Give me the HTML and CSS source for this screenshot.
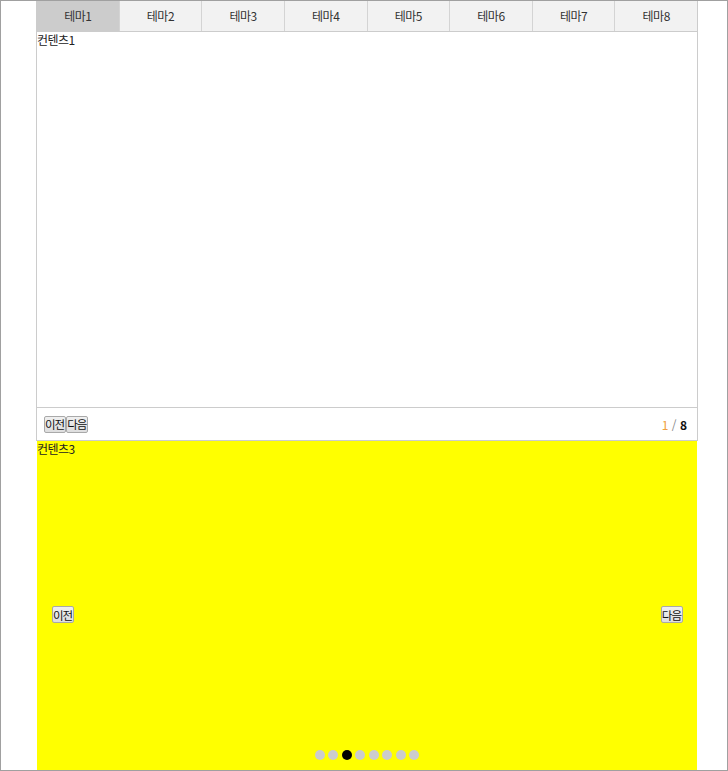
FILE: index.html
```html
<!DOCTYPE html>
<html lang="ko">
<head>
<meta charset="utf-8">
<title>테마</title>
<link rel="stylesheet" href="styles.css">
</head>
<body>
<div class="frame">
  <div class="wrap">
    <div class="tabbox">
      <ul class="tabs">
        <li class="tab active">테마1</li>
        <li class="tab">테마2</li>
        <li class="tab">테마3</li>
        <li class="tab">테마4</li>
        <li class="tab">테마5</li>
        <li class="tab">테마6</li>
        <li class="tab">테마7</li>
        <li class="tab">테마8</li>
      </ul>
      <div class="panel">컨텐츠1</div>
      <div class="pager">
        <div class="btns"><button class="btn">이전</button><button class="btn">다음</button></div>
        <div class="count"><span class="cur">1</span> <span class="sep">/</span> <b>8</b></div>
      </div>
    </div>
    <div class="slider">
      <div class="slide">컨텐츠3</div>
      <button class="btn nav prev">이전</button>
      <button class="btn nav next">다음</button>
      <div class="dots">
        <span class="dot"></span><span class="dot"></span><span class="dot on"></span><span class="dot"></span><span class="dot"></span><span class="dot"></span><span class="dot"></span><span class="dot"></span>
      </div>
    </div>
  </div>
</div>
</body>
</html>
```
FILE: styles.css
```css
* { box-sizing: border-box; }
html, body { margin: 0; padding: 0; background: #fff; }
body {
  font-family: "Noto Sans CJK KR", "Noto Sans", sans-serif;
  font-size: 12px;
  color: #222;
}
.frame {
  width: 728px;
  height: 771px;
  border: 1px solid #a0a0a0;
  overflow: hidden;
  background: #fff;
}
.wrap {
  width: 662px;
  margin-left: 35px;
}
.tabbox {
  border: 1px solid #cccccc;
  border-top: 0;
}
.tabs {
  list-style: none;
  margin: 0;
  padding: 0;
  display: flex;
  border-bottom: 1px solid #cccccc;
}
.tab {
  flex: 1 1 0;
  height: 30px;
  line-height: 30px;
  text-align: center;
  background: #f2f2f2;
  border-left: 1px solid #d4d4d4;
  color: #333;
  letter-spacing: -0.5px;
}
.tab:first-child { border-left: 0; }
.tab.active { background: #cccccc; }
.panel {
  height: 375px;
  line-height: 16px;
  color: #222;
  letter-spacing: -0.5px;
}
.pager {
  height: 33px;
  border-top: 1px solid #cccccc;
  display: flex;
  align-items: center;
  justify-content: space-between;
  padding: 0 10px 0 7px;
}
.btns { display: flex; }
.btn {
  font-family: "Noto Sans CJK KR", "Noto Sans", sans-serif;
  font-size: 11.5px;
  letter-spacing: -1px;
  line-height: 14px;
  padding: 0 1px 0 0;
  margin: 0;
  border: 1px solid #a9a9a9;
  border-radius: 2px;
  background: linear-gradient(#f0f0f0, #dedede);
  color: #111;
  height: 17px;
}
.count { color: #888; }
.count .cur { color: #f0a040; }
.count b { color: #111; }
.slider {
  position: relative;
  height: 330px;
  background: #ffff00;
  margin: 0 1px;
}
.slide { line-height: 16px; color: #222; letter-spacing: -0.5px; }
.nav {
  position: absolute;
  top: 50%;
}
.prev { left: 15px; }
.next { right: 14px; }
.dots {
  position: absolute;
  left: 0;
  right: 0;
  bottom: 11px;
  display: flex;
  justify-content: center;
  gap: 3.5px;
}
.dot {
  width: 10px;
  height: 10px;
  border-radius: 50%;
  background: #cccccc;
}
.dot.on { background: #000; }
```
